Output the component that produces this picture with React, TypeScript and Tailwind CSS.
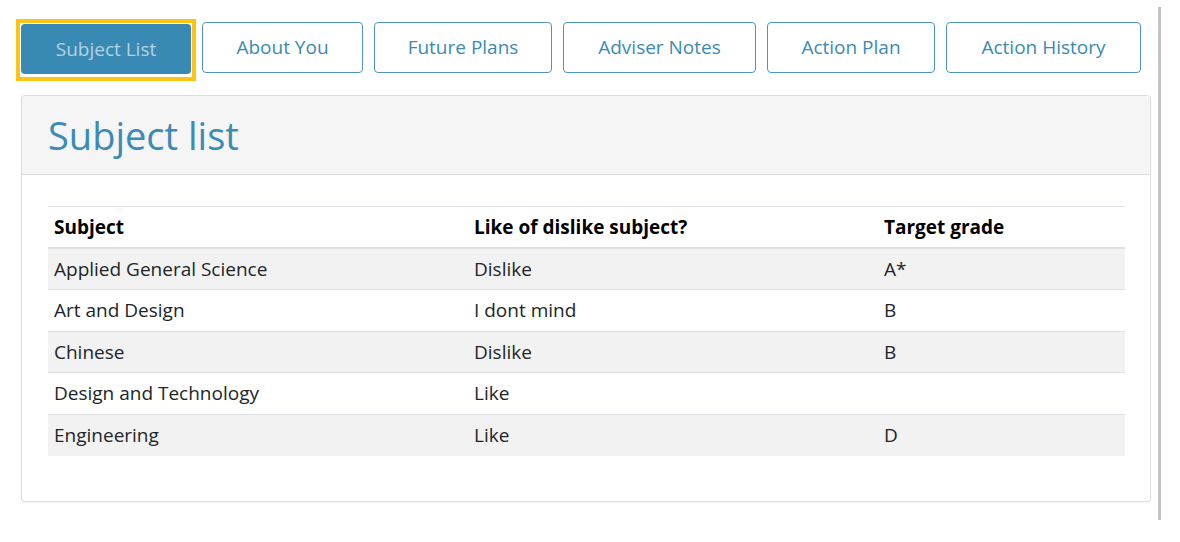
import { useState } from "react";

type Tab = { label: string; width: string };

const tabs: Tab[] = [
  { label: "Subject List", width: "w-[170px]" },
  { label: "About You", width: "w-[161px]" },
  { label: "Future Plans", width: "w-[178px]" },
  { label: "Adviser Notes", width: "w-[193px]" },
  { label: "Action Plan", width: "w-[168px]" },
  { label: "Action History", width: "w-[195px]" },
];

type SubjectRow = { subject: string; preference: string; grade: string };

const rows: SubjectRow[] = [
  { subject: "Applied General Science", preference: "Dislike", grade: "A*" },
  { subject: "Art and Design", preference: "I dont mind", grade: "B" },
  { subject: "Chinese", preference: "Dislike", grade: "B" },
  { subject: "Design and Technology", preference: "Like", grade: "" },
  { subject: "Engineering", preference: "Like", grade: "D" },
];

function TabBar({
  active,
  onSelect,
}: {
  active: string;
  onSelect: (label: string) => void;
}) {
  return (
    <div className="flex items-start">
      {tabs.map((tab, i) => {
        const selected = tab.label === active;
        if (selected) {
          // focus box is square and sits a little below the button
          return (
            <div
              key={tab.label}
              className="border-4 border-[#fdc414] bg-white p-[1px] pb-[3px]"
            >
              <button
                onClick={() => onSelect(tab.label)}
                className={`${tab.width} h-[50px] rounded-[4px] bg-[#388ab4] text-[19px] text-[#b5d2e3]`}
              >
                {tab.label}
              </button>
            </div>
          );
        }
        return (
          <button
            key={tab.label}
            onClick={() => onSelect(tab.label)}
            className={`${tab.width} ${
              i === 1 ? "ml-[6px]" : "ml-[11px]"
            } mt-[3px] h-[51px] rounded-[4px] border-[1.5px] border-[#4b96be] bg-white text-[19px] text-[#3a8ab5]`}
          >
            {tab.label}
          </button>
        );
      })}
    </div>
  );
}

function SubjectTable() {
  return (
    <table className="w-full table-fixed border-collapse text-[19px] text-[#212529]">
      <thead>
        <tr className="h-[41.6px] border-t border-b-2 border-[#dee2e6]">
          <th className="w-[420px] pl-[6px] text-left font-bold text-black">Subject</th>
          <th className="w-[410px] pl-[6px] text-left font-bold text-black">
            Like of dislike subject?
          </th>
          <th className="pl-[6px] text-left font-bold text-black">Target grade</th>
        </tr>
      </thead>
      <tbody>
        {rows.map((row, i) => (
          <tr
            key={row.subject}
            className={`h-[41.6px] border-t border-[#dee2e6] ${
              i % 2 === 0 ? "bg-[#f2f2f2]" : "bg-white"
            }`}
          >
            <td className="pl-[6px]">{row.subject}</td>
            <td className="pl-[6px]">{row.preference}</td>
            <td className="pl-[6px]">{row.grade}</td>
          </tr>
        ))}
      </tbody>
    </table>
  );
}

export default function App() {
  const [active, setActive] = useState("Subject List");

  return (
    <div className="flex h-[542px] w-[1180px] bg-white font-['Open_Sans',sans-serif]">
      <div className="w-[1158px] pl-[16px] pt-[19px]">
        <TabBar active={active} onSelect={setActive} />
        <div className="mt-[14px] ml-[5px] w-[1130px] rounded-[4px] border border-[#dddddd] bg-white shadow-[0_1px_2px_rgba(0,0,0,0.06)]">
          <div className="flex h-[79px] items-center rounded-t-[4px] border-b border-[#dddddd] bg-[#f5f5f5] pl-[26px]">
            <h1 className="text-[38px] leading-none text-[#3a8bb5]">Subject list</h1>
          </div>
          <div className="pt-[31px] pb-[45px] pl-[26px] pr-[25px]">
            <SubjectTable />
          </div>
        </div>
      </div>
      <div className="mt-[7px] h-[513px] w-[3px] bg-[#c4c4c4]" />
    </div>
  );
}
